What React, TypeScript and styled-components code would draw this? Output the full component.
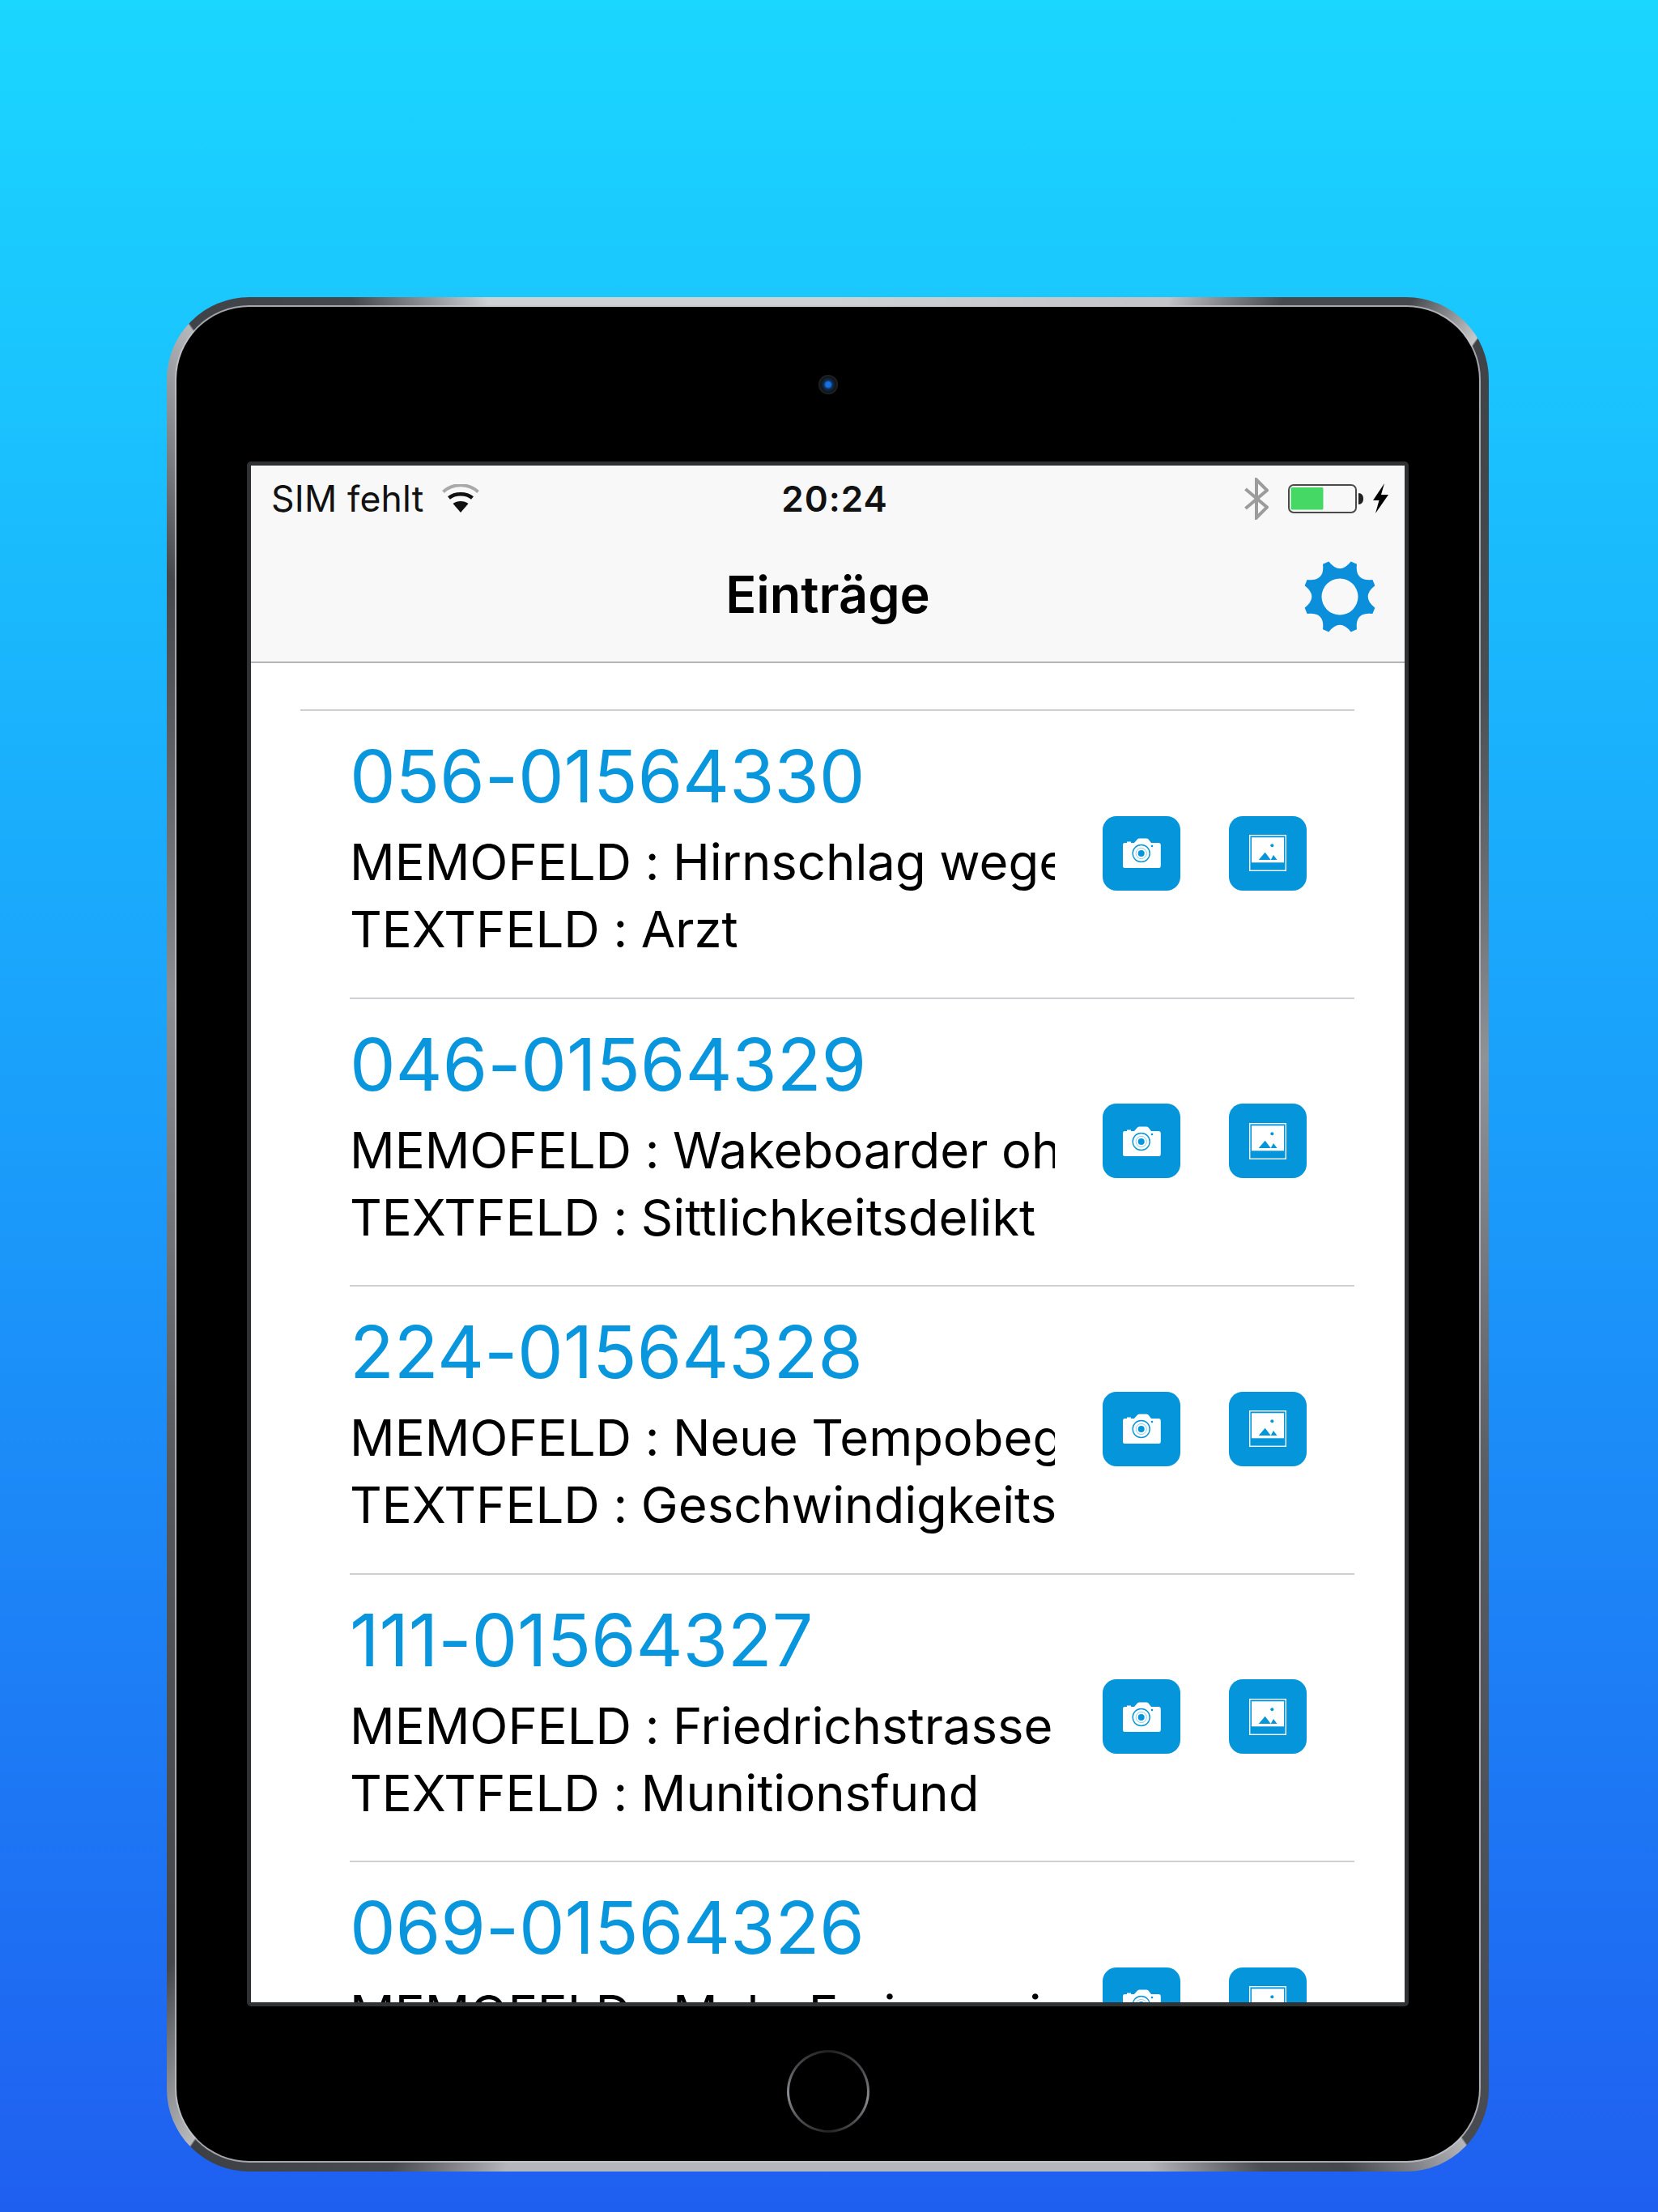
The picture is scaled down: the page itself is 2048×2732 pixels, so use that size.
import React from "react";
import styled, { createGlobalStyle } from "styled-components";

const Global = createGlobalStyle`
  html, body { margin: 0; padding: 0; }
  body { font-family: Inter, "Liberation Sans", sans-serif; color: #000; }
  * { box-sizing: border-box; }
`;

const Page = styled.div`
  width: 2048px;
  height: 2732px;
  padding: 367px 0 0 206px;
  overflow: hidden;
  background: linear-gradient(180deg, #1ad7ff 0%, #1a9ffb 50%, #1f5ff0 100%);
`;

const Device = styled.div`
  width: 1633px;
  height: 2315px;
  padding: 12px 12px 13px 12px;
  border-radius: 102px;
  background: conic-gradient(
    #cfd2d5 0deg, #c2c4c8 20deg, #46494e 26deg, #45484d 32deg, #c8cacc 35.9deg,
    #3f4246 36deg, #4a4d52 50deg, #8f9398 75deg, #5a5d62 110deg, #474a4f 144.9deg,
    #b4b6ba 145deg, #44474c 151deg, #484b50 155deg, #b4b6bc 161deg, #b4b6bc 199deg,
    #484b50 205deg, #3c3f44 214.9deg, #b8babd 215deg, #44474c 222deg, #55585d 250deg,
    #8b8f94 290deg, #44474c 315deg, #b5b8bb 324.9deg, #3f4246 325deg, #45484d 333deg,
    #cfd2d5 340deg, #cfd2d5 360deg
  );
`;

const Bezel = styled.div`
  height: 100%;
  padding-top: 84px;
  display: flex;
  flex-direction: column;
  align-items: center;
  background: #000;
  border-radius: 90px;
  box-shadow: 0 0 0 2px rgba(196, 200, 205, 0.75);
`;

const FrontCamera = styled.div`
  width: 24px;
  height: 24px;
  border-radius: 50%;
  background: radial-gradient(circle, #1a6fe0 0 18%, #0b2f58 32%, #121416 55%, #34373a 85%, #1a1b1d 100%);
`;

const ScreenFrame = styled.div`
  margin-top: 83px;
  width: 1435px;
  height: 1908px;
  border: 5px solid #303132;
  border-radius: 5px;
  background: #fff;
  overflow: hidden;
  display: flex;
  flex-direction: column;
`;

const Header = styled.header`
  flex: none;
  background: #f8f8f8;
  border-bottom: 2px solid #b4b4b6;
`;

const StatusBar = styled.div`
  height: 81px;
  padding: 0 20px 0 25px;
  display: grid;
  grid-template-columns: 1fr auto 1fr;
  align-items: center;
`;

const StatusLeft = styled.div`
  display: flex;
  align-items: center;
  gap: 23px;
`;

const Carrier = styled.span`
  font-size: 44.5px;
  line-height: 60px;
  letter-spacing: 0.2px;
  color: #111;
`;

const Clock = styled.span`
  margin-left: 12px;
  font-size: 44px;
  line-height: 60px;
  font-weight: 600;
  letter-spacing: 1px;
  color: #111;
`;

const StatusRight = styled.div`
  justify-self: end;
  display: flex;
  align-items: center;
  gap: 11px;
`;

const Bluetooth = styled.svg`
  width: 30px;
  height: 52px;
  margin-right: 13px;
`;

const NavBar = styled.div`
  height: 161px;
  padding: 0 35px;
  display: grid;
  grid-template-columns: 1fr auto 1fr;
  align-items: center;
`;

const NavTitle = styled.h1`
  grid-column: 2;
  margin: 0 0 6px;
  font-size: 63px;
  line-height: 80px;
  font-weight: 600;
`;

const GearIcon = styled.svg`
  grid-column: 3;
  justify-self: end;
  width: 90px;
  height: 90px;
`;

const List = styled.div`
  flex: 1;
  min-height: 0;
  padding-top: 57px;
  overflow: hidden;
`;

const TopRule = styled.div`
  height: 2px;
  margin: 0 62px 0 61px;
  background: #d0d0d4;
`;

const Row = styled.div`
  height: 355.5px;
  margin: 0 62px 0 122px;
  border-bottom: 2px solid #d0d0d4;
  display: flex;
  align-items: center;
  gap: 59px;
`;

const TextCol = styled.div`
  align-self: flex-start;
  flex: none;
  width: 871px;
  padding-top: 31px;
  overflow: hidden;
  white-space: nowrap;
`;

const Code = styled.div`
  height: 100px;
  margin-bottom: 14px;
  font-size: 90px;
  line-height: 100px;
  letter-spacing: -0.2px;
  font-weight: 400;
  color: #0a96dc;
`;

const Field = styled.div`
  font-size: 61.6px;
  line-height: 83px;
  word-spacing: -0.7px;
  font-feature-settings: "calt" 0;
  color: #000;
`;

const Buttons = styled.div`
  display: flex;
  gap: 60px;
  padding-bottom: 2px;
`;

const IconButton = styled.button`
  width: 96px;
  height: 92px;
  padding: 0;
  border: 0;
  border-radius: 17px;
  background: #0595da;
  display: flex;
  align-items: center;
  justify-content: center;
`;

const CameraGlyph = styled.svg`
  width: 47px;
  height: 37px;
`;

const ImageGlyph = styled.svg`
  width: 46px;
  height: 45px;
`;

const HomeButton = styled.div`
  margin-top: 54px;
  width: 102px;
  height: 102px;
  border-radius: 50%;
  padding: 3px;
  background: conic-gradient(#1e1f21 0deg, #4a4c4f 60deg, #8b8d90 100deg, #4d4f52 140deg, #202123 180deg, #4d4f52 225deg, #8b8d90 265deg, #46484b 310deg, #1e1f21 360deg);
`;

const HomeInner = styled.div`
  width: 100%;
  height: 100%;
  border-radius: 50%;
  background: #000;
`;

const gearPath = (() => {
  const c = 45;
  const pt = (r: number, deg: number) => {
    const a = ((deg - 90) * Math.PI) / 180;
    return `${(c + r * Math.cos(a)).toFixed(2)} ${(c + r * Math.sin(a)).toFixed(2)}`;
  };
  let d = "";
  for (let i = 0; i < 8; i++) {
    const m = 22.5 + i * 45;
    d += `${i === 0 ? "M" : "L"}${pt(45.5, m - 5)} L${pt(45.5, m + 5)} `;
    d += `Q${pt(26, m + 22.5)} ${pt(45.5, m + 40)} `;
  }
  d += "Z ";
  d += "M67.5 45 A22.5 22.5 0 1 0 22.5 45 A22.5 22.5 0 1 0 67.5 45 Z";
  return d;
})();

const Camera = () => (
  <CameraGlyph viewBox="0 0 47 37">
    <path
      d="M2 6 H5 V4.5 H10 V6 H14 L18 1.5 Q19 0.5 20.5 0.5 H29 Q30.5 0.5 31.5 1.5 L35 6 H44.5 Q46.8 6 46.8 8.5 V34.5 Q46.8 37 44.5 37 H2.5 Q0 37 0 34.5 V8.5 Q0 6 2 6 Z"
      fill="#fff"
    />
    <circle cx="22.7" cy="19" r="10.5" fill="none" stroke="#0595da" strokeWidth="1.4" />
    <circle cx="22.7" cy="19" r="6.6" fill="none" stroke="#0595da" strokeWidth="1" opacity=".45" />
    <circle cx="22.7" cy="19" r="4" fill="#0595da" />
    <circle cx="36" cy="10" r="1.3" fill="#0595da" />
  </CameraGlyph>
);

const Picture = () => (
  <ImageGlyph viewBox="0 0 46 45">
    <rect x=".7" y=".7" width="44.6" height="43.6" fill="none" stroke="#fff" strokeWidth="1.4" />
    <rect x="3" y="3.3" width="40" height="31" fill="#fff" />
    <path d="M11.7 31 L19.7 21.7 L26.7 31 Z M26.7 31 L30 25 L34.5 31 Z" fill="#0595da" />
    <circle cx="28.3" cy="13.3" r="2" fill="#0595da" />
  </ImageGlyph>
);

const rows = [
  ["056-01564330", "MEMOFELD : Hirnschlag wegen Hitze", "TEXTFELD : Arzt"],
  ["046-01564329", "MEMOFELD : Wakeboarder ohne Brett", "TEXTFELD : Sittlichkeitsdelikt"],
  ["224-01564328", "MEMOFELD : Neue Tempobegrenzung", "TEXTFELD : Geschwindigkeitsübertretung"],
  ["111-01564327", "MEMOFELD : Friedrichstrasse gesperrt", "TEXTFELD : Munitionsfund"],
  ["069-01564326", "MEMOFELD : Mehr Freiraum im Park", "TEXTFELD : Ruhestörung"],
];

export default function App() {
  return (
    <Page>
      <Global />
      <Device>
        <Bezel>
          <FrontCamera />
          <ScreenFrame>
            <Header>
              <StatusBar>
                <StatusLeft>
                  <Carrier>SIM fehlt</Carrier>
                  <svg width="46" height="35" viewBox="0 0 46 35">
                    <path d="M1.5 9.5 C13 -1.5 33 -1.5 44.5 9.5" fill="none" stroke="#a9a9a9" strokeWidth="4" />
                    <path d="M8.5 17 C16 10.5 30 10.5 37.5 17" fill="none" stroke="#111" strokeWidth="4.5" />
                    <path d="M13.5 24 C18.5 20 27.5 20 32.5 24 L23 35 Z" fill="#111" />
                  </svg>
                </StatusLeft>
                <Clock>20:24</Clock>
                <StatusRight>
                  <Bluetooth viewBox="0 0 30 52">
                    <path d="M1.5 14 L28 36.5 L15 49.5 V2.5 L28 15.5 L1.5 38" fill="none" stroke="#9c9c9c" strokeWidth="4" />
                  </Bluetooth>
                  <svg width="93" height="36" viewBox="0 0 93 36">
                    <rect x="1" y="1" width="83" height="34" rx="6" fill="none" stroke="#4a4a4a" strokeWidth="2" />
                    <rect x="3.5" y="4" width="40" height="27.5" rx="1.5" fill="#46d865" />
                    <path d="M87 11 C91 11 93 14 93 18 C93 22 91 25 87 25 Z" fill="#222" />
                  </svg>
                  <svg width="20" height="37" viewBox="0 0 20 37">
                    <path d="M15 0 L1 21 H8.5 L4 37 L20 14 H11 Z" fill="#000" />
                  </svg>
                </StatusRight>
              </StatusBar>
              <NavBar>
                <NavTitle>Einträge</NavTitle>
                <GearIcon viewBox="0 0 90 90">
                  <path d={gearPath} fill="#0b8fdb" fillRule="evenodd" />
                </GearIcon>
              </NavBar>
            </Header>
            <List>
              <TopRule />
              {rows.map(([code, memo, text]) => (
                <Row key={code}>
                  <TextCol>
                    <Code>{code}</Code>
                    <Field>{memo}</Field>
                    <Field>{text}</Field>
                  </TextCol>
                  <Buttons>
                    <IconButton aria-label="Kamera"><Camera /></IconButton>
                    <IconButton aria-label="Bild"><Picture /></IconButton>
                  </Buttons>
                </Row>
              ))}
            </List>
          </ScreenFrame>
          <HomeButton><HomeInner /></HomeButton>
        </Bezel>
      </Device>
    </Page>
  );
}
